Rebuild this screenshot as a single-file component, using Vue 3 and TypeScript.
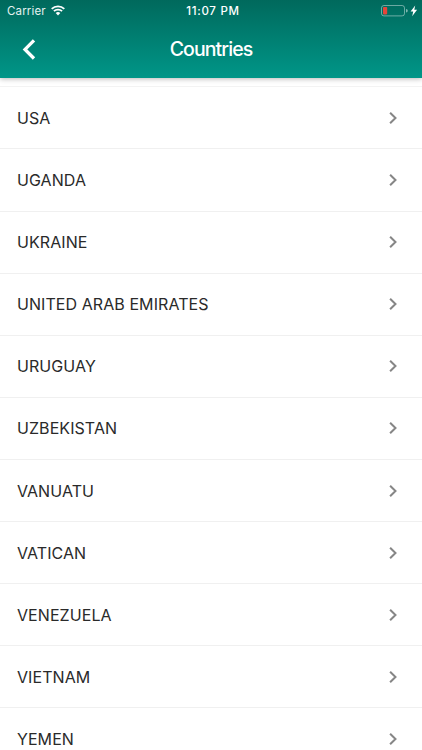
<script setup lang="ts">
const countries: string[] = [
  'USA',
  'UGANDA',
  'UKRAINE',
  'UNITED ARAB EMIRATES',
  'URUGUAY',
  'UZBEKISTAN',
  'VANUATU',
  'VATICAN',
  'VENEZUELA',
  'VIETNAM',
  'YEMEN',
]
</script>

<template>
  <div class="screen">
    <header class="top">
      <div class="status">
        <div class="carrier">
          <span>Carrier</span>
          <svg class="wifi" width="14" height="11" viewBox="0 0 14 11">
            <path d="M.7 3.9a9 9 0 0 1 12.6 0M2.9 6.2a5.9 5.9 0 0 1 8.2 0" fill="none" stroke="#fff" stroke-width="1.8" />
            <path d="M4.7 8.1a3.4 3.4 0 0 1 4.6 0L7 10.5z" fill="#fff" />
          </svg>
        </div>
        <span class="time">11:07 PM</span>
        <div class="power">
          <svg width="38" height="12" viewBox="0 0 38 12">
            <rect x=".5" y=".5" width="23" height="10.4" rx="2.4" fill="none" stroke="#fff" stroke-opacity=".42" />
            <rect x="2" y="2" width="4.2" height="7.4" rx=".8" fill="#e5453a" />
            <path d="M25 4a1.8 1.8 0 0 1 0 3.6z" fill="#fff" fill-opacity=".5" />
            <path d="M34.2.4 29.6 6.4h2.6l-1 4.8 4.9-6.5h-2.8z" fill="#fff" />
          </svg>
        </div>
      </div>
      <nav class="bar">
        <button class="back" aria-label="Back">
          <svg width="14" height="22" viewBox="0 0 14 22">
            <path d="M12 2.3 3 11.4l9 9.1" fill="none" stroke="#fff" stroke-width="3.3" />
          </svg>
        </button>
        <h1>Countries</h1>
        <span></span>
      </nav>
    </header>
    <ul class="list">
      <li v-for="country in countries" :key="country">
        <span>{{ country }}</span>
        <svg width="10" height="14" viewBox="0 0 10 14">
          <path d="M2.1 1.7 7.5 7l-5.4 5.3" fill="none" stroke="#868686" stroke-width="2" />
        </svg>
      </li>
    </ul>
  </div>
</template>

<style>
body {
  background: #fff;
}
</style>

<style scoped>
.screen {
  height: 750px;
  overflow: hidden;
  background: #fff;
  font-family: Inter, "Liberation Sans", sans-serif;
}
.top {
  position: relative;
  height: 78px;
  box-sizing: border-box;
  color: #fff;
  background: linear-gradient(#00695c, #009688);
  box-shadow: 0 1px 5px rgba(0, 0, 0, 0.28);
}
.status {
  display: grid;
  grid-template-columns: 1fr auto 1fr;
  align-items: center;
  height: 22px;
  padding: 0 3px 0 7px;
  font-size: 11.5px;
}
.carrier {
  display: flex;
  align-items: center;
  gap: 5px;
  letter-spacing: 0.15px;
  color: #e4f2f0;
}
.wifi {
  margin-bottom: 2px;
}
.time {
  font-weight: 550;
  font-size: 11.5px;
  letter-spacing: 0.7px;
}
.power {
  display: flex;
  justify-content: flex-end;
}
.bar {
  display: grid;
  grid-template-columns: 60px 1fr 60px;
  align-items: center;
  height: 54px;
}
.back {
  display: flex;
  padding: 0 0 0 22px;
  border: 0;
  background: none;
}
h1 {
  margin: 0;
  text-align: center;
  font-size: 19.5px;
  font-weight: 450;
  letter-spacing: -0.9px;
}
.list {
  list-style: none;
  margin: 8.4px 0 0;
  padding: 0;
  border-top: 1px solid #f3f3f3;
}
li {
  display: flex;
  align-items: center;
  justify-content: space-between;
  box-sizing: border-box;
  height: 62.1px;
  padding: 0 24px 0 17px;
  border-bottom: 1px solid #f0f0f0;
  color: #2a2a2a;
  font-size: 16px;
  font-weight: 400;
  letter-spacing: 0.07px;
}
</style>
